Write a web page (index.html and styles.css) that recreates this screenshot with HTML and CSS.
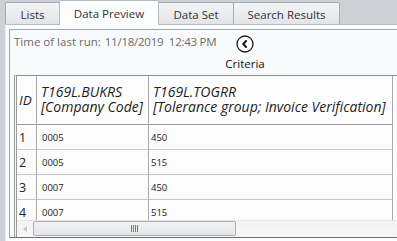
FILE: index.html
```html
<!DOCTYPE html>
<html>
<head>
<meta charset="utf-8">
<link rel="stylesheet" href="styles.css">
</head>
<body>
<div class="tabs">
  <div class="tab t-lists">Lists</div>
  <div class="tab sel t-prev">Data Preview</div>
  <div class="tab t-set">Data Set</div>
  <div class="tab t-search">Search Results</div>
</div>
<div class="page">
  <div class="box">
    <div class="toprow">
      <div class="lastrun"><span class="lbl">Time of last run:</span><span class="val">11/18/2019  12:43 PM</span></div>
      <div class="criteria">
        <svg class="crit-icon" width="18" height="18" viewBox="0 0 18 18">
          <circle cx="9" cy="9" r="8" fill="#fff" stroke="#1a1a1a" stroke-width="1.3"/>
          <path d="M10.1 6 L7.2 9 L10.1 12" fill="none" stroke="#1a1a1a" stroke-width="2" stroke-linecap="round" stroke-linejoin="round"/>
        </svg>
        <span class="crit-label">Criteria</span>
      </div>
    </div>
    <div class="grid">
      <div class="gridview">
        <table class="data">
          <colgroup><col class="c-id"><col class="c-bukrs"><col class="c-togrr"></colgroup>
          <thead>
            <tr>
              <th class="h-id">ID</th>
              <th class="h-col"><div class="hl">T169L.BUKRS</div><div class="hl">[Company Code]</div></th>
              <th class="h-col h-last"><div class="hl">T169L.TOGRR</div><div class="hl">[Tolerance group; Invoice Verification]</div></th>
            </tr>
          </thead>
          <tbody>
            <tr><td class="d-id">1</td><td class="d-b">0005</td><td class="d-t">450</td></tr>
            <tr><td class="d-id">2</td><td class="d-b">0005</td><td class="d-t">515</td></tr>
            <tr><td class="d-id">3</td><td class="d-b">0007</td><td class="d-t">450</td></tr>
            <tr><td class="d-id">4</td><td class="d-b">0007</td><td class="d-t">515</td></tr>
          </tbody>
        </table>
      </div>
      <div class="hscroll">
        <div class="sb-btn"><span class="sb-arrow"></span></div>
        <div class="sb-thumb"><span class="grip"></span><span class="grip"></span><span class="grip"></span><span class="grip"></span></div>
        <div class="sb-track"></div>
      </div>
    </div>
  </div>
</div>
</body>
</html>
```

FILE: styles.css
```css
* { box-sizing: border-box; }
html, body { margin: 0; padding: 0; }
body {
  width: 397px;
  height: 241px;
  overflow: hidden;
  background: #cdd1d5;
  font-family: "Open Sans", "Noto Sans", sans-serif;
}

/* tabs */
.tabs {
  display: flex;
  align-items: flex-end;
  height: 24px;
  padding-left: 5px;
}
.tab {
  height: 22px;
  border: 1px solid #a6acb2;
  border-bottom: none;
  border-radius: 2px 2px 0 0;
  background: linear-gradient(#f3f4f5, #e2e5e8);
  font-size: 11.5px;
  color: #333;
  display: flex;
  align-items: center;
  justify-content: center;
  padding-top: 1px;
}
.t-lists { width: 55px; }
.t-prev { width: 100px; margin-left: -1px; }
.t-set { width: 76px; margin-left: -1px; }
.t-search { width: 107px; margin-left: -1px; }
.tab.sel {
  height: 25px;
  margin-bottom: -1px;
  background: #fcfdfd;
  border-color: #b4bcc4;
  position: relative;
  z-index: 1;
  padding-top: 0;
}

/* page */
.page {
  margin-left: 5px;
  height: 217px;
  border-top: 1px solid #b4bdc6;
  border-left: 1px solid #eceff2;
  background: #fbfcfd;
  padding: 4px 0 0 3px;
}
.box {
  height: 209px;
  border: 1px solid #a3a6a9;
  border-right: none;
  border-bottom: 1px solid #6f6f6f;
  background: #f9fafb;
  padding-left: 4px;
  display: flex;
  flex-direction: column;
}
.toprow {
  height: 45px;
  display: flex;
  align-items: flex-start;
}
.lastrun {
  width: 210px;
  padding-top: 4px;
  font-size: 11.5px;
  color: #6b6b6b;
  white-space: pre;
}
.lastrun .val { margin-left: 4px; letter-spacing: -0.25px; }
.criteria {
  width: 42px;
  display: flex;
  flex-direction: column;
  align-items: center;
  padding-top: 5px;
}
.crit-icon { display: block; }
.crit-label {
  margin-top: 4px;
  font-size: 11.5px;
  line-height: 14px;
  color: #111;
}

/* grid */
.grid {
  flex: 1;
  border-top: 1px solid #8c8c8c;
  border-left: 3px double #9a9a9a;
  display: flex;
  flex-direction: column;
}
.gridview {
  height: 144px;
  overflow: hidden;
  background: #fcfcfc;
}
.data {
  border-collapse: separate;
  border-spacing: 0;
  table-layout: fixed;
  width: 376px;
}
.c-id { width: 20px; }
.c-bukrs { width: 112px; }
.c-togrr { width: 244px; }
.data th, .data td {
  border-right: 1px solid #a9a9a9;
  border-bottom: 1px solid #c9c9c9;
  white-space: nowrap;
  overflow: hidden;
  vertical-align: middle;
  text-align: left;
}
.data th {
  height: 49px;
  border-bottom-color: #9a9a9a;
  font-weight: normal;
  font-style: italic;
  color: #1e1e1e;
  padding: 0 0 2px 4px;
  font-size: 14px;
  line-height: 15px;
  background: #fdfdfd;
}
.hl { line-height: 15px; }
.data th.h-id {
  padding: 0 0 0 2px;
  font-size: 13.5px;
}
.data td {
  height: 25px;
  padding: 0;
  color: #222;
}
.d-id { font-size: 12.5px; padding-left: 2px !important; }
.d-b { font-size: 9.5px; padding-left: 5px !important; }
.d-t { font-size: 9.5px; padding-left: 2px !important; }

/* scrollbar */
.hscroll {
  height: 17px;
  display: flex;
  background: linear-gradient(#f3f3f3, #f7f7f7);
  border-top: 1px solid #e6e6e6;
}
.sb-btn {
  width: 16px;
  display: flex;
  align-items: center;
  justify-content: center;
}
.sb-arrow {
  width: 0;
  height: 0;
  border-top: 3px solid transparent;
  border-bottom: 3px solid transparent;
  border-right: 4px solid #c4c4c4;
}
.sb-thumb {
  width: 203px;
  height: 15px;
  border: 1px solid #adadad;
  border-radius: 2px;
  background: linear-gradient(#f1f2f3, #e4e5e7);
  display: flex;
  align-items: center;
  justify-content: center;
  gap: 1px;
}
.grip {
  width: 1px;
  height: 7px;
  background: #7a7a7a;
}
.sb-track { flex: 1; }
```
